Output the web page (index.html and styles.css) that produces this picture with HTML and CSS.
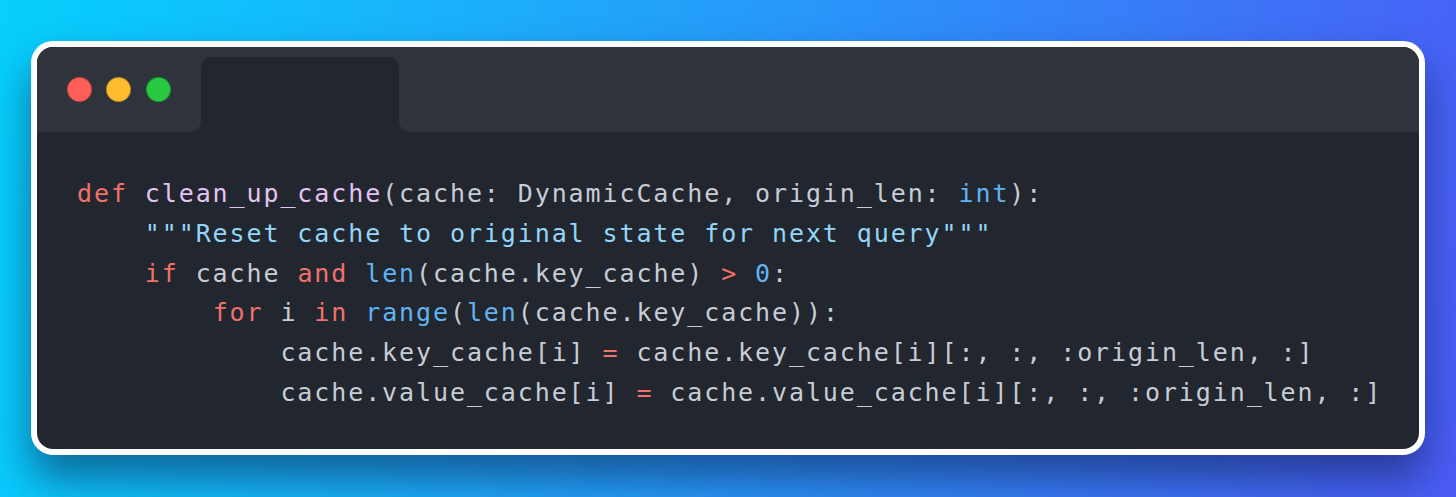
FILE: index.html
```html
<!DOCTYPE html>
<html>
<head>
<meta charset="utf-8">
<link rel="stylesheet" href="styles.css">
</head>
<body>
<div class="window">
  <div class="titlebar">
    <div class="lights">
      <span class="light red"></span>
      <span class="light yellow"></span>
      <span class="light green"></span>
    </div>
    <div class="tab"></div>
  </div>
  <pre class="code"><span class="kw">def</span> <span class="fn">clean_up_cache</span>(cache: DynamicCache, origin_len: <span class="bi">int</span>):
    <span class="str">"""Reset cache to original state for next query"""</span>
    <span class="kw">if</span> cache <span class="kw">and</span> <span class="bi">len</span>(cache.key_cache) <span class="kw">&gt;</span> <span class="bi">0</span>:
        <span class="kw">for</span> i <span class="kw">in</span> <span class="bi">range</span>(<span class="bi">len</span>(cache.key_cache)):
            cache.key_cache[i] <span class="kw">=</span> cache.key_cache[i][:, :, :origin_len, :]
            cache.value_cache[i] <span class="kw">=</span> cache.value_cache[i][:, :, :origin_len, :]</pre>
</div>
</body>
</html>
```

FILE: styles.css
```css
html, body {
  margin: 0;
  height: 100%;
}
body {
  box-sizing: border-box;
  padding: 41px 31px 42px;
  background: linear-gradient(100deg, #06d0fd 0%, #1bb0fb 30%, #2a94fa 55%, #4b5cf6 100%);
  overflow: hidden;
}
.window {
  height: 414px;
  box-sizing: border-box;
  border: 6px solid #ffffff;
  border-radius: 22px;
  background: #22262e;
  overflow: hidden;
  box-shadow: 0 24px 40px rgba(10, 20, 60, 0.5);
  display: flex;
  flex-direction: column;
}
.titlebar {
  height: 85px;
  flex: none;
  background: #2f333c;
  display: flex;
  align-items: stretch;
  padding-top: 10px;
  box-sizing: border-box;
}
.lights {
  display: flex;
  align-items: center;
  gap: 14.5px;
  margin-left: 29.5px;
  padding-bottom: 10px;
}
.light {
  width: 25px;
  height: 25px;
  border-radius: 50%;
  box-sizing: border-box;
  border: 1px solid rgba(0, 0, 0, 0.25);
}
.red { background: #ff5f57; }
.yellow { background: #febc2e; }
.green { background: #28c840; }
.tab {
  position: relative;
  width: 198px;
  margin-left: 30.5px;
  background: #22262e;
  border-radius: 11px 11px 0 0;
}
.tab::before,
.tab::after {
  content: "";
  position: absolute;
  bottom: 0;
  width: 11px;
  height: 11px;
}
.tab::before {
  left: -11px;
  background: radial-gradient(circle at 0 0, #2f333c 10.5px, #22262e 11px);
}
.tab::after {
  right: -11px;
  background: radial-gradient(circle at 100% 0, #2f333c 10.5px, #22262e 11px);
}
.code {
  margin: 0;
  padding: 42px 40px 0;
  font-family: "DejaVu Sans Mono", "Liberation Mono", monospace;
  font-size: 25px;
  letter-spacing: 1.9px;
  line-height: 39.8px;
  color: #c6cdd7;
  white-space: pre;
}
.kw { color: #f0716a; }
.fn { color: #e2c4f4; }
.bi { color: #61b3f2; }
.str { color: #93d6f8; }
```
